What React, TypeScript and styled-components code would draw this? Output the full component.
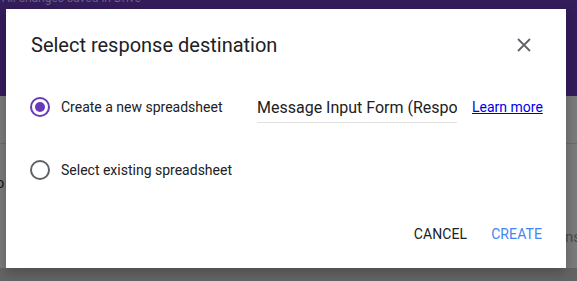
import * as React from "react";
import styled, { createGlobalStyle } from "styled-components";

const GlobalStyle = createGlobalStyle`
  html, body {
    margin: 0;
    padding: 0;
    width: 577px;
    height: 281px;
    overflow: hidden;
    font-family: Roboto, "Liberation Sans", Arial, sans-serif;
  }
`;

const Page = styled.div`
  position: relative;
  width: 577px;
  height: 281px;
  overflow: hidden;
  background: #7b7b7b;
  display: flex;
  flex-direction: column;
`;

const TopBand = styled.div`
  height: 96px;
  background: #341d5b;
  overflow: hidden;
`;

const SavedNote = styled.div`
  margin-top: -9px;
  padding-left: 2px;
  font-size: 12px;
  color: #6d5d88;
`;

const BandBody = styled.div`
  height: 47px;
  border-bottom: 1px solid #6c6c6c;
`;

const BackRow = styled.div`
  display: flex;
  justify-content: space-between;
  align-items: flex-start;
  height: 110px;
  font-size: 15px;
  color: #2f2f2f;
`;

const EdgeText = styled.span<{ $side: "left" | "right" }>`
  margin-${(p) => p.$side}: ${(p) => (p.$side === "left" ? "-9px" : "-4px")};
  margin-top: ${(p) => (p.$side === "left" ? "30px" : "84px")};
  color: ${(p) => (p.$side === "left" ? "#1a1a1a" : "#4a4a4a")};
`;

const Footer = styled.div`
  margin-top: auto;
  height: 13px;
  background: #646464;
`;

const Overlay = styled.div`
  position: absolute;
  left: 6px;
  top: 9px;
`;

const Dialog = styled.div`
  width: 560px;
  height: 259px;
  background: #ffffff;
  box-shadow: 0 4px 12px rgba(0, 0, 0, 0.25);
  display: flex;
  flex-direction: column;
`;

const Header = styled.div`
  display: flex;
  align-items: center;
  justify-content: space-between;
  padding: 24px 30px 0 25px;
  height: 24px;
`;

const Title = styled.h2`
  margin: 0;
  font-size: 20px;
  font-weight: 400;
  color: #202124;
`;

const CloseButton = styled.button`
  width: 24px;
  height: 24px;
  padding: 0;
  border: none;
  background: none;
  display: flex;
  align-items: center;
  justify-content: center;
`;

const Options = styled.div`
  display: flex;
  flex-direction: column;
  padding: 39px 0 0 24px;
  gap: 41px;
`;

const OptionRow = styled.div`
  display: flex;
  align-items: center;
  height: 22px;
`;

const Radio = styled.span<{ $checked?: boolean }>`
  box-sizing: border-box;
  width: 20px;
  height: 20px;
  border-radius: 50%;
  border: 2px solid ${(p) => (p.$checked ? "#673ab7" : "#5f6368")};
  display: flex;
  align-items: center;
  justify-content: center;
  flex-shrink: 0;

  &::after {
    content: "";
    display: ${(p) => (p.$checked ? "block" : "none")};
    width: 10px;
    height: 10px;
    border-radius: 50%;
    background: #673ab7;
  }
`;

const OptionLabel = styled.span`
  margin-left: 11px;
  font-size: 14px;
  color: #202124;
  width: 196px;
  flex-shrink: 0;
  white-space: nowrap;
`;

const NameInput = styled.input`
  width: 200px;
  height: 26px;
  flex-shrink: 0;
  box-sizing: border-box;
  margin: 6px 0 0 0;
  padding: 0 0 4px 0;
  border: none;
  border-bottom: 1px solid #e0e0e0;
  outline: none;
  background: transparent;
  font-family: Roboto, "Liberation Sans", Arial, sans-serif;
  font-size: 16px;
  color: #202124;
`;

const LearnLink = styled.a`
  margin-left: 15px;
  font-size: 14px;
  color: #0000ee;
  white-space: nowrap;
  text-decoration: underline;
`;

const Actions = styled.div`
  margin-top: auto;
  display: flex;
  justify-content: flex-end;
  align-items: center;
  gap: 24px;
  padding: 0 24px 26px 0;
`;

const ActionButton = styled.button<{ $primary?: boolean }>`
  padding: 0;
  border: none;
  background: none;
  font-family: Roboto, "Liberation Sans", Arial, sans-serif;
  font-size: 14px;
  font-weight: 400;
  letter-spacing: 0.1px;
  color: ${(p) => (p.$primary ? "#4285f4" : "#202124")};
`;

export default function App() {
  return (
    <>
      <GlobalStyle />
      <Page>
        <TopBand>
          <SavedNote>All changes saved in Drive</SavedNote>
        </TopBand>
        <BandBody />
        <BackRow>
          <EdgeText $side="left">to</EdgeText>
          <EdgeText $side="right">ns</EdgeText>
        </BackRow>
        <Footer />
        <Overlay>
          <Dialog>
            <Header>
              <Title>Select response destination</Title>
              <CloseButton aria-label="Close">
                <svg width="14" height="14" viewBox="0 0 14 14">
                  <path d="M1 1L13 13M13 1L1 13" stroke="#5f6368" strokeWidth="1.8" />
                </svg>
              </CloseButton>
            </Header>
            <Options>
              <OptionRow>
                <Radio $checked />
                <OptionLabel>Create a new spreadsheet</OptionLabel>
                <NameInput readOnly value="Message Input Form (Responses)" />
                <LearnLink href="#">Learn more</LearnLink>
              </OptionRow>
              <OptionRow>
                <Radio />
                <OptionLabel>Select existing spreadsheet</OptionLabel>
              </OptionRow>
            </Options>
            <Actions>
              <ActionButton>CANCEL</ActionButton>
              <ActionButton $primary>CREATE</ActionButton>
            </Actions>
          </Dialog>
        </Overlay>
      </Page>
    </>
  );
}
